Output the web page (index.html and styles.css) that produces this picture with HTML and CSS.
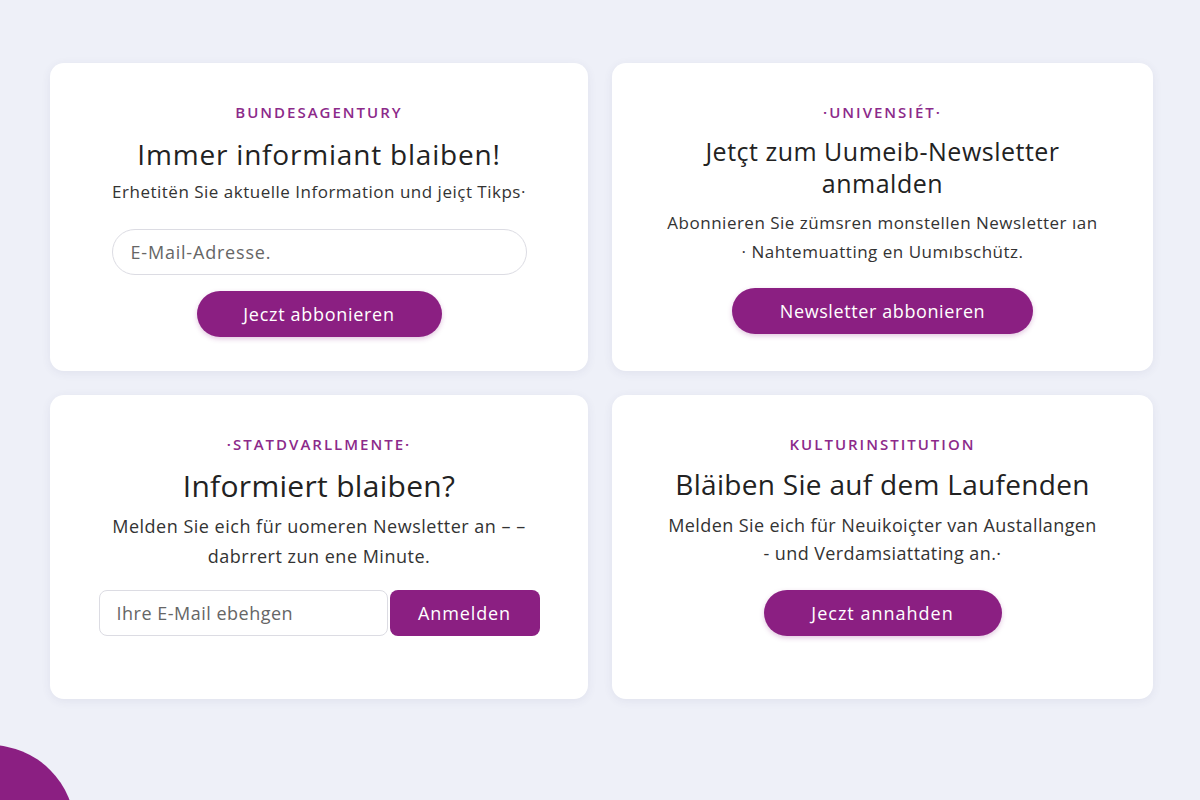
FILE: index.html
```html
<!DOCTYPE html>
<html lang="de">
<head>
<meta charset="utf-8">
<title>Newsletter</title>
<link rel="stylesheet" href="styles.css">
</head>
<body>
<div class="page">
<div class="blob"></div>
<main class="grid">
  <section class="card card-a">
    <div class="eyebrow">BUNDESAGENTURY</div>
    <h2 class="title">Immer informiant blaiben!</h2>
    <p class="desc">Erhetitën Sie aktuelle Information und jeiçt Tikps·</p>
    <input class="pill-input" type="text" placeholder="E-Mail-Adresse.">
    <button class="btn btn-a">Jeczt abbonieren</button>
  </section>
  <section class="card card-b">
    <div class="eyebrow">·UNIVENSIÉT·</div>
    <h2 class="title title-b">Jetçt zum Uumeib-Newsletter<br>anmalden</h2>
    <p class="desc desc-b">Abonnieren Sie zümsren monstellen Newsletter ıan<br>· Nahtemuatting en Uumıbschütz.</p>
    <button class="btn btn-b">Newsletter abbonieren</button>
  </section>
  <section class="card card-c">
    <div class="eyebrow">·STATDVARLLMENTE·</div>
    <h2 class="title title-c">Informiert blaiben?</h2>
    <p class="desc desc-c">Melden Sie eich für uomeren Newsletter an – –<br>dabrrert zun ene Minute.</p>
    <div class="inline-form">
      <input class="box-input" type="text" placeholder="Ihre E-Mail ebehgen">
      <button class="box-btn">Anmelden</button>
    </div>
  </section>
  <section class="card card-d">
    <div class="eyebrow">KULTURINSTITUTION</div>
    <h2 class="title title-d">Bläiben Sie auf dem Laufenden</h2>
    <p class="desc desc-d">Melden Sie eich für Neuikoiçter van Austallangen<br>- und Verdamsiattating an.·</p>
    <button class="btn btn-d">Jeczt annahden</button>
  </section>
</main>
</div>
</body>
</html>
```

FILE: styles.css
```css
* { box-sizing: border-box; }
html, body { margin: 0; overflow: hidden; }
body {
  background: #eef0f8;
  font-family: "Open Sans", Lato, sans-serif;
  color: #262626;
}
.page {
  position: relative;
  height: 800px;
  overflow: hidden;
  padding: 63px 47px 0 50px;
}
.blob {
  position: absolute;
  left: -95px;
  top: 745px;
  width: 170px;
  height: 170px;
  border-radius: 50%;
  background: #8b1f82;
}
.grid {
  display: grid;
  grid-template-columns: 538px 541px;
  grid-template-rows: 308px 304px;
  column-gap: 24px;
  row-gap: 24px;
}
.card {
  background: #fff;
  border-radius: 14px;
  box-shadow: 0 2px 10px rgba(60, 60, 110, 0.08);
  display: flex;
  flex-direction: column;
  align-items: center;
  text-align: center;
  padding-top: 41px;
}
.eyebrow {
  color: #8c2a8a;
  font-size: 15px;
  font-weight: 600;
  letter-spacing: 2px;
  line-height: 16px;
}
.title {
  margin: 17px 0 0;
  font-size: 28px;
  font-weight: 500;
  line-height: 34px;
  color: #222;
  letter-spacing: 0.8px;
}
.desc {
  margin: 9px 0 0;
  font-size: 17px;
  line-height: 24px;
  color: #333;
  letter-spacing: 0.5px;
}
.pill-input {
  margin-top: 25px;
  width: 415px;
  height: 46px;
  border: 1px solid #dcdce3;
  border-radius: 23px;
  padding: 0 18px;
  font: inherit;
  font-size: 18px;
  letter-spacing: 0.8px;
  outline: none;
  background: #fff;
}
.pill-input::placeholder, .box-input::placeholder { color: #666; }
.btn {
  border: 0;
  background: #8b1f82;
  color: #fff;
  font-family: inherit;
  font-size: 18px;
  font-weight: 500;
  letter-spacing: 0.7px;
  height: 46px;
  border-radius: 23px;
  box-shadow: 0 2px 5px rgba(139, 31, 130, 0.25);
}
.btn-a { margin-top: 16px; width: 245px; }
.title-b { margin-top: 15px; line-height: 32px; font-size: 25px; letter-spacing: 0.5px; }
.desc-b { margin-top: 9px; line-height: 29px; }
.btn-b { margin-top: 22px; width: 301px; letter-spacing: 0.6px; }
.title-c { margin-top: 16px; font-size: 30px; line-height: 36px; letter-spacing: 0.3px; }
.desc-c { margin-top: 7px; line-height: 30px; font-size: 18px; letter-spacing: 0.5px; }
.inline-form {
  margin-top: 19px;
  display: flex;
  width: 441px;
  height: 46px;
  gap: 2px;
}
.box-input {
  flex: 1;
  border: 1px solid #dcdce3;
  border-radius: 8px;
  padding: 0 17px;
  font: inherit;
  font-size: 18px;
  letter-spacing: 0.5px;
  outline: none;
  background: #fff;
  min-width: 0;
}
.box-btn {
  width: 150px;
  border: 0;
  border-radius: 8px;
  background: #8b1f82;
  color: #fff;
  font-family: inherit;
  font-size: 18px;
  font-weight: 500;
  letter-spacing: 0.9px;
}
.title-d { margin-top: 14px; font-size: 28px; line-height: 36px; letter-spacing: 0.3px; }
.desc-d { margin-top: 9px; line-height: 28px; font-size: 18px; letter-spacing: 0.4px; }
.btn-d { margin-top: 23px; width: 238px; letter-spacing: 1px; }
```
